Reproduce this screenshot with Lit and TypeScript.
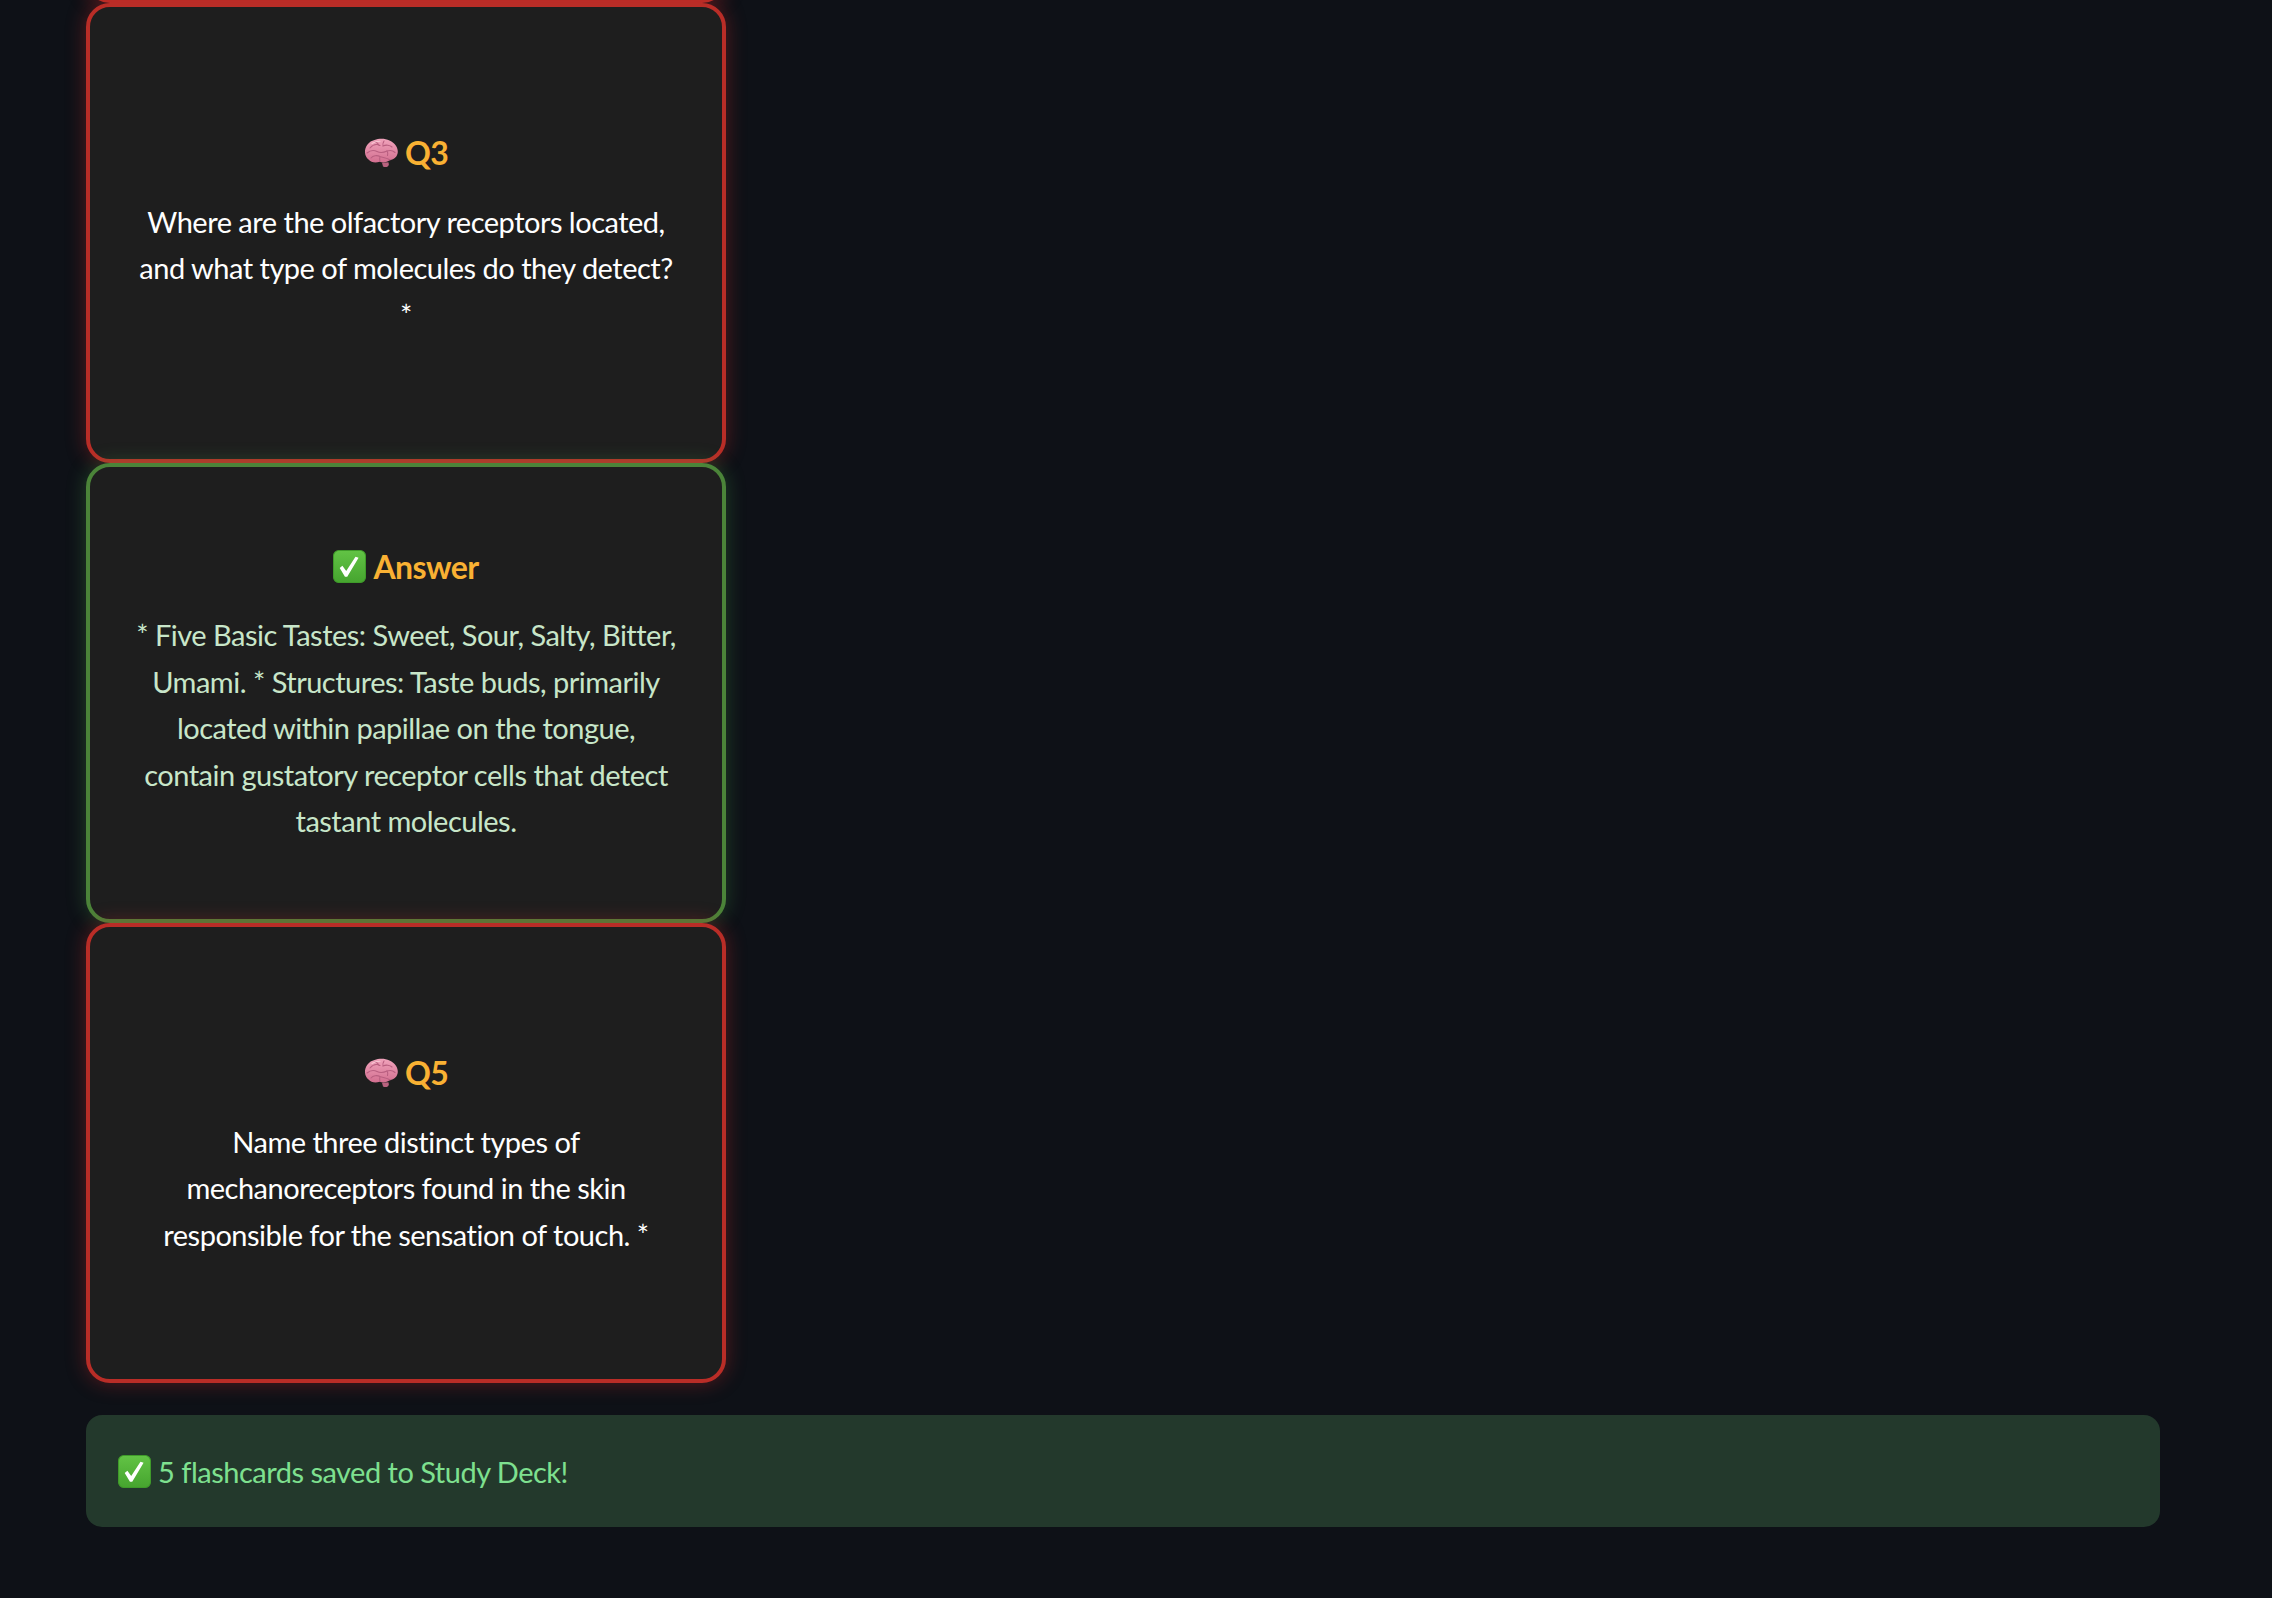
import { LitElement, html, css, svg } from "lit";
import { customElement } from "lit/decorators.js";

type Card = { kind: "question" | "answer"; title: string; text: string };

const CARDS: Card[] = [
  { kind: "question", title: "Q2", text: "" },
  {
    kind: "question",
    title: "Q3",
    text: "Where are the olfactory receptors located, and what type of molecules do they detect? *",
  },
  {
    kind: "answer",
    title: "Answer",
    text: "* Five Basic Tastes: Sweet, Sour, Salty, Bitter, Umami. * Structures: Taste buds, primarily located within papillae on the tongue, contain gustatory receptor cells that detect tastant molecules.",
  },
  {
    kind: "question",
    title: "Q5",
    text: "Name three distinct types of mechanoreceptors found in the skin responsible for the sensation of touch. *",
  },
];

const brainIcon = svg`
  <svg class="emoji" viewBox="0 0 34 30" width="34" height="30">
    <defs>
      <linearGradient id="brain" x1="0" y1="0" x2="0" y2="1">
        <stop offset="0" stop-color="#f0a3bb"/>
        <stop offset="1" stop-color="#d36f90"/>
      </linearGradient>
    </defs>
    <path d="M19 28.5c2.5 1.2 5.5.6 5.8-2l-.3-2.3-6.5.6z" fill="#b9627f"/>
    <path d="M1 14.5C.6 8.5 5 3.2 10.5 2 15 .2 21 .2 25.500 2.500 31 5 34 9.500 33.800 14c-.2 4.500-3.800 7.500-7.800 8-3 2.500-7 3-10.500 1.800C11.500 25 7 24.500 4.500 21.500 2.500 20 1.200 17.500 1 14.500z" fill="url(#brain)"/>
    <g fill="none" stroke="#b95f80" stroke-width="1.1" stroke-linecap="round">
      <path d="M6 10c3-3.500 7-4 10-2.500M11 3.500c2 1 3.500 2.400 4 4M20 3c-1 1.500-1.500 3-1 5 3-1.500 7-1 9 1"/>
      <path d="M3 15c3-2.500 7-3 10-1.500 3 1.500 7 1 10-.5 3-1 6-.5 8 1.500"/>
      <path d="M7 20c2-2.500 6-3 9-1.500 3 1.200 7 1 10 3.500M16 18.500c-.5 2-.5 3.500 0 5M23 13c1 1.500 1 3 .5 4.500"/>
    </g>
    <path d="M8 5.500c2-1.500 5-2.300 8-2.300" fill="none" stroke="#f8c6d4" stroke-width="1.100" stroke-linecap="round"/>
  </svg>
`;

const checkIcon = svg`
  <svg class="emoji" viewBox="0 0 32 32" width="33" height="33">
    <defs>
      <linearGradient id="check" x1="0" y1="0" x2="0" y2="1">
        <stop offset="0" stop-color="#62c345"/>
        <stop offset="1" stop-color="#46a52f"/>
      </linearGradient>
    </defs>
    <rect x="0.500" y="0.500" width="31" height="31" rx="5" fill="url(#check)" stroke="#3f9a2a"/>
    <path d="M6.500 17.500l2.600-2.200 3.700 5 9-13.800 3 1-11 18.500h-2.200z" fill="#fff"/>
  </svg>
`;

@customElement("app-root")
export class AppRoot extends LitElement {
  static styles = css`
    :host {
      display: block;
      min-height: 1598px;
      background: #0e1117;
      font-family: "Lato", "Noto Sans", sans-serif;
      overflow: hidden;
    }

    .page {
      display: flex;
      flex-direction: column;
      align-items: flex-start;
      padding: 0 112px 71px 86px;
    }

    .card {
      box-sizing: border-box;
      width: 640px;
      height: 460px;
      padding: 0 40px;
      border: 4px solid;
      border-radius: 24px;
      background: #1e1e1e;
      display: flex;
      flex-direction: column;
      align-items: center;
      justify-content: center;
      text-align: center;
    }

    .card:first-child {
      margin-top: -457px;
    }

    .question {
      border-color: #b92d27;
      box-shadow: 0 0 20px rgba(198, 40, 40, 0.4);
    }

    .answer {
      border-color: #4b8439;
      box-shadow: 0 0 20px rgba(76, 175, 80, 0.3);
    }

    .title {
      display: flex;
      align-items: center;
      gap: 7px;
      height: 50px;
      margin-bottom: 21px;
      font-size: 32px;
      font-weight: 700;
      letter-spacing: -0.6px;
      color: #f9b133;
    }

    .text {
      font-size: 29px;
      line-height: 46.4px;
      letter-spacing: -0.5px;
      color: #ffffff;
    }

    .answer .text {
      color: #c8e6c9;
    }

    .emoji {
      flex: none;
    }

    .success {
      box-sizing: border-box;
      align-self: stretch;
      height: 112px;
      margin-top: 32px;
      padding: 0 32px;
      border-radius: 16px;
      background: #23392c;
      display: flex;
      align-items: center;
      gap: 7px;
      font-size: 29px;
      letter-spacing: -0.5px;
      color: #7ee08f;
    }
  `;

  renderCard(card: Card) {
    return html`
      <div class="card ${card.kind}">
        ${card.text
          ? html`
              <div class="title">
                ${card.kind === "answer" ? checkIcon : brainIcon}
                <span>${card.title}</span>
              </div>
              <div class="text">${card.text}</div>
            `
          : ""}
      </div>
    `;
  }

  render() {
    return html`
      <div class="page">
        ${CARDS.map((c) => this.renderCard(c))}
        <div class="success">${checkIcon}<span>5 flashcards saved to Study Deck!</span></div>
      </div>
    `;
  }
}
